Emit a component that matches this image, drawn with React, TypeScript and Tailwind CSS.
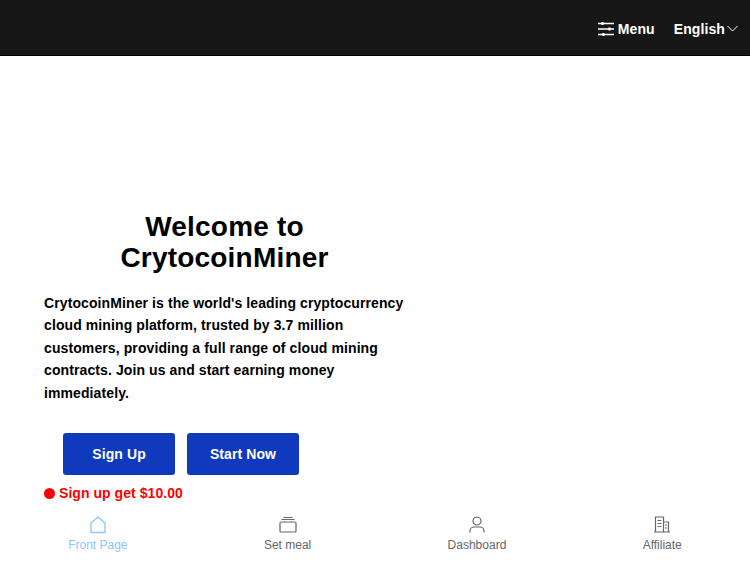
const Menu = () => (
  <svg width="16" height="16" viewBox="0 0 16 16" fill="none" stroke="currentColor" strokeWidth="1.3">
    <path d="M0 2.500h16M0 8h16M0 13.500h16" />
    <path d="M4.500 1v3M11.500 6.500v3M5.500 12v3" strokeWidth="2.200" />
  </svg>
);

const Chevron = () => (
  <svg width="11" height="7" viewBox="0 0 11 7" fill="none" stroke="currentColor" strokeWidth="1">
    <path d="M.5 1l5 5 5-5" />
  </svg>
);

const Home = () => (
  <svg width="18" height="18" viewBox="0 0 18 18" fill="none" stroke="currentColor" strokeWidth="1.300">
    <path d="M2 7L9 1l7 6v9.500h-14z" strokeLinejoin="round" />
  </svg>
);

const Meal = () => (
  <svg width="18" height="18" viewBox="0 0 18 18" fill="none" stroke="currentColor" strokeWidth="1.200">
    <rect x="1" y="6" width="16" height="10" rx="1" />
    <path d="M2.500 3.500h13M4.500 1.500h9" />
  </svg>
);

const User = () => (
  <svg width="18" height="18" viewBox="0 0 18 18" fill="none" stroke="currentColor" strokeWidth="1.200">
    <circle cx="9" cy="5" r="4" />
    <path d="M2 16.500v-1.500a4 4 0 0 1 4-4h6a4 4 0 0 1 4 4v1.500" />
  </svg>
);

const Building = () => (
  <svg width="18" height="18" viewBox="0 0 18 18" fill="none" stroke="currentColor" strokeWidth="1.200">
    <path d="M2.500 16v-15h8v15M10.500 6h5v10M1 16h16" />
    <path d="M4.500 4.500h4M4.500 7.500h4M4.500 10.500h4M12 9h2M12 12h2" />
  </svg>
);

const tabs = [
  { label: "Front Page", icon: <Home />, active: true },
  { label: "Set meal", icon: <Meal />, active: false },
  { label: "Dashboard", icon: <User />, active: false },
  { label: "Affiliate", icon: <Building />, active: false },
];

const App = () => {
  return (
    <div className="h-[563px] flex flex-col overflow-hidden bg-white font-['Liberation_Sans',Arial,sans-serif]">
      <header className="h-14 shrink-0 bg-[#171717] border-b border-black flex items-center justify-end text-white font-bold text-sm tracking-[0.1px] pr-[12px] pt-[2px]">
        <button className="flex items-center gap-[4px] mr-[19px]">
          <Menu />
          Menu
        </button>
        <button className="flex items-center gap-[2px]">
          English
          <Chevron />
        </button>
      </header>

      <main className="flex-1 w-[449px] px-[44px] flex flex-col justify-end">
        <h1 className="text-[28px] leading-[31px] tracking-[0.2px] font-bold text-black text-center">
          Welcome to<br />CrytocoinMiner
        </h1>
        <p className="mt-[19px] text-sm leading-[22.400px] tracking-[0.1px] font-bold text-black">
          CrytocoinMiner is the world's leading cryptocurrency cloud mining platform, trusted by 3.7 million customers, providing a full range of cloud mining contracts. Join us and start earning money immediately.
        </p>
        <div className="mt-[29px] ml-[19px] flex gap-3">
          <button className="w-[112px] h-[42px] rounded-[3px] bg-[#0f3abd] text-white font-bold text-sm tracking-[0.1px]">Sign Up</button>
          <button className="w-[112px] h-[42px] rounded-[3px] bg-[#0f3abd] text-white font-bold text-sm tracking-[0.1px]">Start Now</button>
        </div>
        <div className="mt-[8px] flex items-center gap-[4px] text-[#ff0000] font-bold text-sm tracking-[0.05px] leading-[20px]">
          <span className="w-[11px] h-[11px] rounded-full bg-[#ff0000]" />
          Sign up get $10.00
        </div>
      </main>

      <nav className="h-[60px] shrink-0 flex justify-around pt-[13px]">
        {tabs.map((t) => (
          <div key={t.label} className={`flex flex-col items-center text-xs leading-[14px] gap-[4px] ${t.active ? "text-[#8cc5ff]" : "text-[#666666]"}`}>
            {t.icon}
            {t.label}
          </div>
        ))}
      </nav>
    </div>
  );
};

export default App;
